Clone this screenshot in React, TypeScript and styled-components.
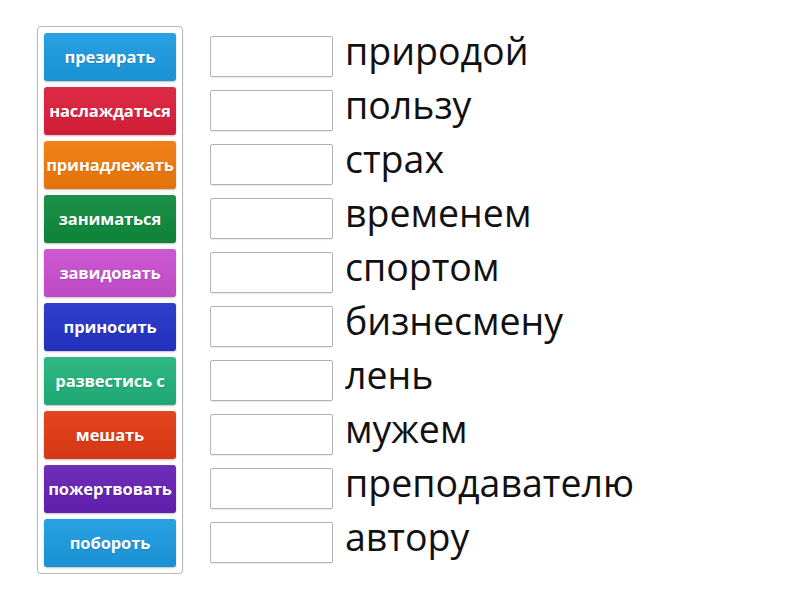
import styled, { createGlobalStyle } from "styled-components";

const GlobalStyle = createGlobalStyle`
  body {
    margin: 0;
    background: #ffffff;
    font-family: "Open Sans", "Noto Sans", sans-serif;
  }
`;

const Page = styled.div`
  display: flex;
  flex-direction: row;
  align-items: flex-start;
  padding: 26px 0 0 37px;
  gap: 27px;
`;

const Bank = styled.div`
  display: flex;
  flex-direction: column;
  gap: 6px;
  padding: 6px;
  border: 1px solid #b9b9b9;
  border-radius: 4px;
  box-shadow: 0 1px 2px rgba(0, 0, 0, 0.12);
`;

const Tile = styled.div<{ $bg: string }>`
  width: 132px;
  height: 48px;
  box-sizing: border-box;
  border-radius: 3px;
  background: ${(p) => p.$bg};
  background-image: linear-gradient(rgba(255, 255, 255, 0.06), rgba(0, 0, 0, 0.06));
  box-shadow: 0 1px 2px rgba(0, 0, 0, 0.25);
  display: flex;
  align-items: center;
  justify-content: center;
  color: #ffffff;
  font-family: "Open Sans", sans-serif;
  font-weight: 700;
  font-size: 16.5px;
  letter-spacing: -0.1px;
  text-shadow: 0 1px 1px rgba(0, 0, 0, 0.15);
  white-space: nowrap;
  padding-bottom: 1px;
`;

const Targets = styled.div`
  display: flex;
  flex-direction: column;
  margin-top: 3px;
`;

const Row = styled.div`
  display: flex;
  flex-direction: row;
  align-items: center;
  height: 54px;
  gap: 12px;
`;

const Slot = styled.div`
  width: 123px;
  height: 41px;
  box-sizing: border-box;
  border: 1px solid #b3b3b3;
  border-radius: 2px;
  background: #ffffff;
  box-shadow: 0 1px 1px rgba(0, 0, 0, 0.08);
`;

const Word = styled.div`
  font-family: "Open Sans", sans-serif;
  font-size: 37.5px;
  color: #111111;
  line-height: 1;
  margin-top: -10px;
`;

const tiles = [
  { text: "презирать", bg: "#1c9ae0" },
  { text: "наслаждаться", bg: "#dc1f3c" },
  { text: "принадлежать", bg: "#f07a0c" },
  { text: "заниматься", bg: "#0e8a3c" },
  { text: "завидовать", bg: "#c94fcf" },
  { text: "приносить", bg: "#2334c8" },
  { text: "развестись с", bg: "#21b27c" },
  { text: "мешать", bg: "#e33a14" },
  { text: "пожертвовать", bg: "#6521b4" },
  { text: "побороть", bg: "#1c9ae0" },
];

const words = [
  "природой",
  "пользу",
  "страх",
  "временем",
  "спортом",
  "бизнесмену",
  "лень",
  "мужем",
  "преподавателю",
  "автору",
];

const App = () => {
  return (
    <>
      <GlobalStyle />
      <Page>
        <Bank>
          {tiles.map((t) => (
            <Tile key={t.text} $bg={t.bg}>
              {t.text}
            </Tile>
          ))}
        </Bank>
        <Targets>
          {words.map((w) => (
            <Row key={w}>
              <Slot />
              <Word>{w}</Word>
            </Row>
          ))}
        </Targets>
      </Page>
    </>
  );
};

export default App;
